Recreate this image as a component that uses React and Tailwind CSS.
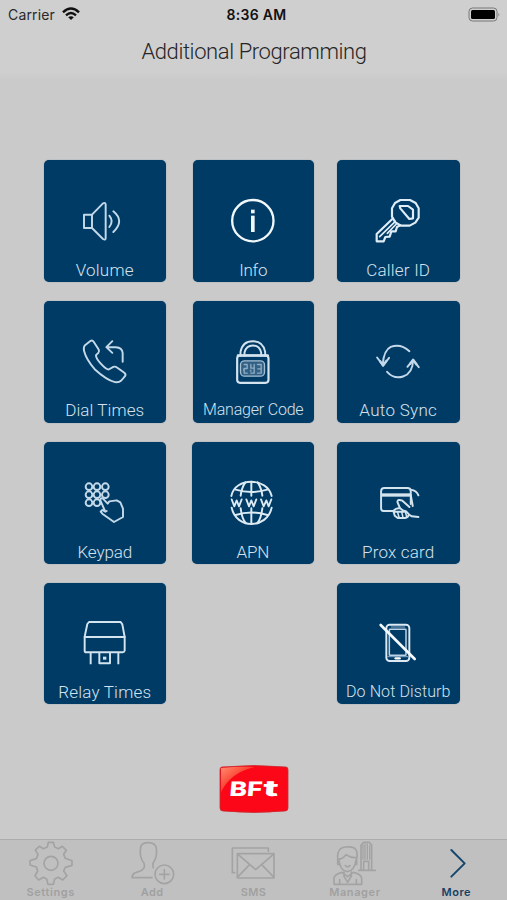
import { useState } from 'react'

const ICON_PROPS = {
  fill: 'none',
  strokeLinecap: 'round',
  strokeLinejoin: 'round',
}

function TileIcon({ viewBox, width = 5.8, color = '#c3d9ea', children }) {
  return (
    <svg className="h-[50px] w-[50px]" viewBox={viewBox} stroke={color} strokeWidth={width} {...ICON_PROPS}>
      {children}
    </svg>
  )
}

function VolumeIcon() {
  return (
    <TileIcon viewBox="120 120 150 150">
      <path d="M156 179H132V219H156M156 179V219M156 179L189 145Q197 141 197 149V249Q197 257 189 252L156 219" />
      <path d="M208 182Q222 199 208 216M220 169Q255 198 220 231" />
    </TileIcon>
  )
}

function InfoIcon() {
  return (
    <TileIcon viewBox="121.5 120 150 150" width={7} color="#f1f8fc">
      <circle cx="196" cy="197" r="62" />
      <path d="M196 164V175" strokeWidth={11} strokeLinecap="butt" />
      <path d="M196 182V231" strokeWidth={11} strokeLinecap="butt" />
    </TileIcon>
  )
}

function KeyIcon() {
  return (
    <TileIcon viewBox="121 120 150 150" width={6.5} color="#dfedf6">
      <path d="M203 135H232L249 144L258 160V188L248 203L231 212H205L188 202L178 185V160L187 144Z" />
      <path d="M201 153H226L241 164V190L230 192L203 160Z" />
      <path d="M179 192L132 237V259H153L158 246L171 245L176 229H189L193 216L203 211" />
      <path d="M188 199L141 245M191 207L164 235" strokeWidth={5} />
    </TileIcon>
  )
}

function DialIcon() {
  return (
    <TileIcon viewBox="120 118.5 150 150">
      <path d="M135 146L152 133Q157 130 161 136L176 159Q179 165 175 169L168 176Q167 184 181 200Q198 219 206 219L220 211Q226 209 231 213L253 229Q259 233 255 239L244 252Q236 259 225 257Q199 250 164 218Q139 190 132 163Q130 151 135 146Z" />
      <path d="M248 196V169Q246 153 228 152H202M217 134L199 152L217 169" />
    </TileIcon>
  )
}

function LockIcon() {
  return (
    <TileIcon viewBox="121.5 118.5 150 150" color="#d3e4ef">
      <path d="M159 178V166Q165 134 196 134Q227 134 233 166V178M171 178V168Q176 147 196 147Q216 147 221 168V178" />
      <rect x="149" y="177" width="94" height="82" rx="9" strokeWidth={6.5} />
      <path d="M151 177H241" strokeWidth={7} />
      <rect x="159" y="193" width="72" height="46" rx="12" strokeWidth={4} fill="#336085" stroke="#a4bed1" />
      <path d="M170 204H179V216H170V230H179M190 204V215H199M200 204V230H190M210 204H221V217H211M221 217V230H210M169 217V222M190 221V224" stroke="#8fadc4" strokeWidth={4} />
    </TileIcon>
  )
}

function SyncIcon() {
  return (
    <TileIcon viewBox="555.75 118.5 150 150">
      <path d="M665 164Q639 140 609 151Q588 161 585 204M568 183L586 207L604 184" />
      <path d="M598 226Q619 249 646 240Q675 230 676 191M659 211L676 190L693 212" />
      <path d="M577 194L586 207L596 193M667 202L676 190L686 203" strokeWidth={7} />
    </TileIcon>
  )
}

function KeypadIcon() {
  const dots = [
    [147, 146], [171, 146], [196, 146],
    [147, 170], [171, 170], [196, 170],
    [147, 194], [171, 194],
  ]
  return (
    <TileIcon viewBox="120 117 150 150">
      {dots.map(([cx, cy]) => (
        <circle key={`${cx}-${cy}`} cx={cx} cy={cy} r="10" />
      ))}
      <path d="M195 219L181 187Q181 178 189 182L203 197L208 190L230 187L241 193L249 212V237L222 252L187 227L182 221L187 216L196 221L200 219" />
    </TileIcon>
  )
}

function GlobeIcon() {
  return (
    <TileIcon viewBox="123 117 150 150" color="#dceaf3">
      <path d="M133 174C144 117 241 117 254 174M134 209C147 274 240 274 254 209" />
      <path d="M193 131V173M193 211V257M175 133Q164 149 161 173M212 133Q223 149 226 173M161 211Q165 244 177 256M226 211Q222 244 210 256" />
      <path d="M146 155Q193 169 241 155M146 231Q193 216 241 231" />
      <path
        d="M134 184L142 205L149 187L156 205L164 184M178 184L186 205L193 187L200 205L208 184M222 184L230 205L238 187L245 205L253 184"
        strokeWidth={5.5}
      />
    </TileIcon>
  )
}

function CardIcon() {
  return (
    <TileIcon viewBox="555.75 117 150 150" color="#d3e4ef">
      <path d="M617 219H587Q580 219 580 211V160Q580 150 590 150H659Q669 150 669 160V198" />
      <path d="M582 171H667" strokeWidth={10} strokeLinecap="butt" />
      <path d="M669 155Q687 158 692 172M669 171L675 204M665 207L644 188Q629 182 629 192L637 211Q647 220 655 220Q663 230 672 235L692 237" />
      <path d="M637 211Q624 209 617 219L621 233L630 240H652Q661 239 663 231M617 221H650" />
      <path d="M629 221L634 238M642 222L646 240M653 222L657 237" strokeWidth={4.5} />
    </TileIcon>
  )
}

function RelayIcon() {
  return (
    <TileIcon viewBox="120 120 150 150" color="#d3e4ef">
      <path d="M147 132H242L247 139L254 177V218Q253 223 248 223H139Q134 223 134 218V176L142 138Z" />
      <path d="M134 177H254" />
      <path d="M152 226V256M235 226V256M178 226V256H210V226" strokeLinecap="square" />
      <path d="M194 236V245" strokeWidth={10} strokeLinecap="butt" />
    </TileIcon>
  )
}

function DisturbIcon() {
  return (
    <TileIcon viewBox="121 120 150 150" color="#dceaf3">
      <rect x="161" y="140" width="69" height="109" rx="10" />
      <rect x="170" y="154" width="50" height="78" rx="2" strokeWidth={4.5} stroke="#bdd2e2" />
      <path d="M165 236H226M176 147H216" strokeWidth={3} stroke="#8badca" />
      <path d="M189 241H201" strokeWidth={7} stroke="#fff" />
      <path d="M144 141L246 243" strokeWidth={8} stroke="#f5fafc" />
    </TileIcon>
  )
}

const tiles = [
  { label: 'Volume', icon: VolumeIcon, text: 'text-[17px] tracking-[0.2px]' },
  { label: 'Info', icon: InfoIcon, text: 'text-[17px] tracking-[-0.2px]', size: 'w-[121.5px] h-[122px]' },
  { label: 'Caller ID', icon: KeyIcon, text: 'text-[17px] tracking-[0.2px]' },
  { label: 'Dial Times', icon: DialIcon, text: 'text-[17px] tracking-[0.1px]' },
  { label: 'Manager Code', icon: LockIcon, text: 'text-[16px] tracking-[-0.2px]', size: 'w-[121.5px] h-[122px]' },
  { label: 'Auto Sync', icon: SyncIcon, text: 'text-[17px] tracking-[0.3px]' },
  { label: 'Keypad', icon: KeypadIcon, text: 'text-[17px] tracking-[-0.1px]' },
  { label: 'APN', icon: GlobeIcon, text: 'text-[17px] tracking-[-0.2px]', size: '-ml-[1px] h-[122px] w-[122.5px]' },
  { label: 'Prox card', icon: CardIcon, text: 'text-[17px] tracking-[0.2px]' },
  { label: 'Relay Times', icon: RelayIcon, text: 'text-[17px] tracking-[0.2px]', size: 'h-[121px] w-[122.5px]', gap: 'mt-[13.5px]' },
  null,
  { label: 'Do Not Disturb', icon: DisturbIcon, text: 'text-[16px] tracking-[0.1px]', size: 'h-[121px] w-[122.5px]', gap: 'mt-[13.5px]' },
]

function Tile({ label, icon: Icon, text, size = 'h-[122px] w-[122.5px]', gap = 'mt-[14.5px]' }) {
  return (
    <button
      type="button"
      className={`flex flex-col items-center rounded-[5px] bg-[#003b66] pt-[35px] shadow-[0_0_1px_#53728b] ${size}`}
    >
      <Icon />
      <span className={`font-['Roboto',sans-serif] leading-[20px] font-light whitespace-nowrap text-[#d4e2ed] ${gap} ${text}`}>
        {label}
      </span>
    </button>
  )
}

function StatusBar() {
  return (
    <div className="grid h-[28px] grid-cols-3 items-center pr-[6px] pl-[8px] font-['Inter',sans-serif] text-[#111]">
      <div className="flex items-center gap-[7px] text-[#292929]">
        <span className="text-[14px] tracking-[0.15px]">Carrier</span>
        <svg className="h-[14px] w-[18px]" viewBox="0 0 18 14" fill="none" stroke="#111" strokeWidth="2.4">
          <path d="M1 5.4Q9-2.2 17 5.4M4 8.4Q9 3.8 14 8.4" />
          <path d="M6.2 10.3Q9 8 11.8 10.3L9 13Z" fill="#111" stroke="none" />
        </svg>
      </div>
      <span className="pl-[4px] text-center text-[14px] font-semibold tracking-[0.3px] whitespace-nowrap">8:36 AM</span>
      <svg className="h-[15px] w-[33px] justify-self-end" viewBox="0 0 33 15">
        <rect x="1" y="1" width="28" height="13" rx="3.5" fill="none" stroke="#777" />
        <rect x="3" y="3" width="24" height="9" rx="1.5" fill="#000" />
        <path d="M30.5 5.5Q32 7.5 30.5 9.5Z" fill="#777" />
      </svg>
    </div>
  )
}

function SettingsIcon() {
  return (
    <>
      <path d="M143 45L146 31H161L165 45L176 50L188 43L200 55L192 67L197 79L217 86V100L197 106L192 117L202 131L189 144L176 136L165 141L161 157H145L141 141L131 136L117 144L106 132L114 117L110 105L91 99V86L110 80L115 67L107 54L119 43L131 50Z" />
      <circle cx="154" cy="94" r="21" />
    </>
  )
}

function AddIcon() {
  return (
    <>
      <path d="M457 137H397Q397 128 405 123L424 116Q438 109 433 94Q418 75 423 45Q426 32 446 32Q467 32 470 48Q474 74 460 94Q459 101 461 107" />
      <circle cx="494" cy="127" r="28" />
      <path d="M494 113V141M480 127H508" />
    </>
  )
}

function SmsIcon() {
  return (
    <>
      <path d="M706 122H699V48H807V58" />
      <rect x="714" y="65" width="110" height="73" />
      <path d="M716 67L769 113L822 67M716 134L748 101M822 134L790 101" />
    </>
  )
}

function ManagerIcon() {
  return (
    <>
      <path d="M1012 82Q1009 44 1040 45Q1077 40 1069 82M1012 82Q1026 82 1037 68Q1052 79 1069 76M1016 84Q1019 116 1041 119Q1063 116 1067 84M1012 82V97H1018M1069 82V97H1064" />
      <path d="M1001 157V138Q1002 127 1025 121L1042 134L1059 121Q1084 127 1084 139V157ZM1031 120V133L1042 151L1053 132V120M1018 157V143M1068 157V143M1035 101Q1042 108 1049 101" />
      <path d="M1082 115V40L1090 31H1107L1114 39V115M1075 115H1125M1090 115V88H1105V115" />
      <path d="M1088 40V82M1094 36V82M1101 36V82M1108 40V82" strokeWidth={4} />
    </>
  )
}

function MoreIcon() {
  return <path d="M1353 54L1393 94L1353 134" stroke="#17476d" strokeWidth={6} />
}

// each tab icon is drawn in one shared strip, so only the left edge differs
const tabs = [
  { id: 'settings', label: 'Settings', icon: SettingsIcon, viewBox: '79 24 150 138', spacing: 'tracking-[0.6px]' },
  { id: 'add', label: 'Add', icon: AddIcon, viewBox: '382 24 150 138', spacing: 'tracking-[0.4px]' },
  { id: 'sms', label: 'SMS', icon: SmsIcon, viewBox: '686 24 150 138', spacing: 'tracking-[0.3px]' },
  { id: 'manager', label: 'Manager', icon: ManagerIcon, viewBox: '989 24 150 138', spacing: 'tracking-[0.6px]' },
  { id: 'more', label: 'More', icon: MoreIcon, viewBox: '1292 24 150 138', spacing: 'tracking-[0.5px]' },
]

function TabBar() {
  const [active, setActive] = useState('more')

  return (
    <nav className="mt-auto grid h-[61px] grid-cols-5 border-t border-[#acacac] bg-[#c0c0c0] font-['Inter',sans-serif]">
      {tabs.map(({ id, label, icon: Icon, viewBox, spacing }) => (
        <button
          key={id}
          type="button"
          onClick={() => setActive(id)}
          className={`flex flex-col items-center ${active === id ? 'text-[#174065]' : 'text-[#a0a0a0]'}`}
        >
          <svg className="h-[46px] w-[50px] shrink-0" viewBox={viewBox} stroke="#a3a3a3" strokeWidth={5} {...ICON_PROPS}>
            <Icon />
          </svg>
          <span className={`text-[11px] leading-[13px] font-semibold ${spacing}`}>{label}</span>
        </button>
      ))}
    </nav>
  )
}

function Logo() {
  return (
    <svg className="h-[48px] w-[70px]" viewBox="0 0 70 48">
      <defs>
        <linearGradient id="shine" x1="0" y1="0" x2="1" y2="1">
          <stop offset="0" stopColor="#ff8e70" />
          <stop offset="0.5" stopColor="#fb3a2c" />
          <stop offset="1" stopColor="#fb0718" />
        </linearGradient>
      </defs>
      <path d="M3 2Q35-1 67 2Q69 2 69 5V43Q69 46 66 46Q35 49 4 46Q1 46 1 43V5Q1 2 3 2Z" fill="#fb0718" stroke="#c62d32" strokeWidth="0.8" />
      <path d="M2 3Q20 1 36 2Q12 7 2 27Z" fill="url(#shine)" />
      <g transform="translate(10 31) skewX(-5)" fill="#fff" fontFamily="Inter, sans-serif" fontWeight="800">
        <text x="0" y="0" fontSize="20" textLength="33" lengthAdjust="spacingAndGlyphs">BF</text>
        <text x="33.5" y="0" fontSize="22" textLength="15.5" lengthAdjust="spacingAndGlyphs">t</text>
      </g>
    </svg>
  )
}

export default function App() {
  return (
    <div className="flex h-[900px] w-[507px] flex-col overflow-hidden bg-[#cacaca]">
      <header className="h-[80px] bg-linear-to-b from-[#cfcfcf] from-90% to-[#cacaca]">
        <StatusBar />
        <h1 className="mt-[9px] pl-[1px] text-center font-['Roboto',sans-serif] text-[22px] leading-[30px] font-light tracking-[-0.4px] text-[#262626]">
          Additional Programming
        </h1>
      </header>

      <main className="mt-[80px] ml-[43.5px] grid grid-cols-[149px_144.5px_122.5px] grid-rows-[140.5px_141.5px_141px_122px] items-start">
        {tiles.map((tile, index) => (tile ? <Tile key={tile.label} {...tile} /> : <span key={index} />))}
      </main>

      <div className="mt-[60px] flex justify-center">
        <Logo />
      </div>

      <TabBar />
    </div>
  )
}
